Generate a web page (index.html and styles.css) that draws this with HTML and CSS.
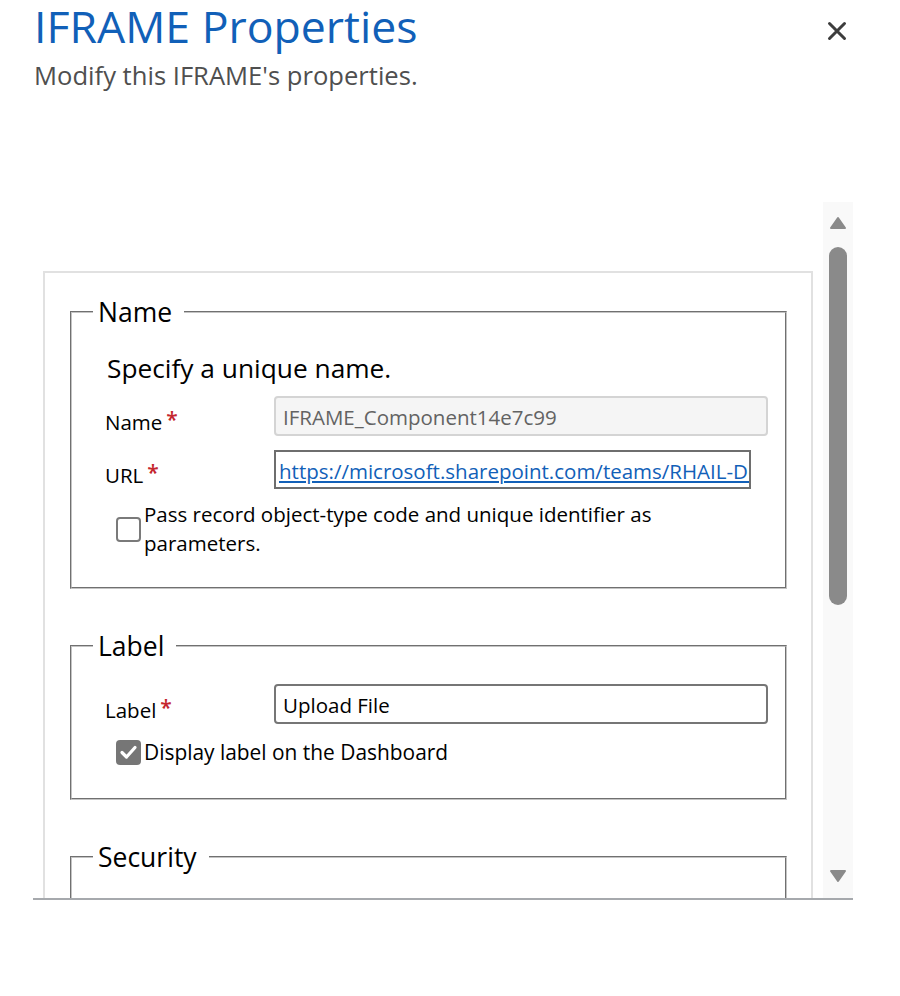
FILE: index.html
```html
<!DOCTYPE html>
<html lang="en">
<head>
<meta charset="utf-8">
<title>IFRAME Properties</title>
<link rel="stylesheet" href="styles.css">
</head>
<body>
<div class="dialog">
  <header class="dlg-header">
    <div class="titles">
      <h1 class="title">IFRAME Properties</h1>
      <p class="subtitle">Modify this IFRAME's properties.</p>
    </div>
    <button class="close" aria-label="Close">
      <svg width="20" height="20" viewBox="0 0 20 20"><path d="M2.5 2.5 L17.5 17.5 M17.5 2.5 L2.5 17.5" stroke="#3d3d3d" stroke-width="3" stroke-linecap="round" fill="none"/></svg>
    </button>
  </header>

  <div class="scroller">
    <div class="viewport">
      <div class="panel">
        <fieldset class="group">
          <legend>Name</legend>
          <p class="desc">Specify a unique name.</p>
          <div class="row">
            <label class="lbl">Name<span class="req">*</span></label>
            <div class="input disabled">IFRAME_Component14e7c99</div>
          </div>
          <div class="row row-url">
            <label class="lbl">URL<span class="req">*</span></label>
            <div class="input url"><a href="#">https://microsoft.sharepoint.com/teams/RHAIL-Dev/Shared%20Documents</a></div>
          </div>
          <div class="check check-first">
            <span class="box"></span>
            <span class="check-text">Pass record object-type code and unique identifier as parameters.</span>
          </div>
        </fieldset>

        <fieldset class="group group-label">
          <legend>Label</legend>
          <div class="row row-label">
            <label class="lbl">Label<span class="req">*</span></label>
            <div class="input normal">Upload File</div>
          </div>
          <div class="check check-label">
            <span class="box checked">
              <svg width="25" height="25" viewBox="0 0 25 25"><path d="M6 12.5 L10.5 17 L19 7.5" stroke="#fff" stroke-width="3.2" fill="none" stroke-linecap="round" stroke-linejoin="round"/></svg>
            </span>
            <span class="check-text">Display label on the Dashboard</span>
          </div>
        </fieldset>

        <fieldset class="group group-security">
          <legend>Security</legend>
        </fieldset>
      </div>
    </div>
    <div class="scrollbar">
      <svg class="arrow" width="18" height="14" viewBox="0 0 18 14"><path d="M9 2 L16 12 L2 12 Z" fill="#8a8a8a" stroke="#8a8a8a" stroke-width="2" stroke-linejoin="round"/></svg>
      <div class="thumb"></div>
      <svg class="arrow arrow-down" width="18" height="14" viewBox="0 0 18 14"><path d="M2 2 L16 2 L9 12 Z" fill="#8a8a8a" stroke="#8a8a8a" stroke-width="2" stroke-linejoin="round"/></svg>
    </div>
  </div>
</div>
</body>
</html>
```

FILE: styles.css
```css
* { box-sizing: border-box; }

body {
  margin: 0;
  background: #fff;
  font-family: "Open Sans", "Noto Sans", sans-serif;
  color: #000;
}

.dialog {
  width: 900px;
}

.dlg-header {
  display: flex;
  justify-content: space-between;
  align-items: flex-start;
  padding: 0 53px 0 34px;
}

.title {
  margin: 0;
  font-size: 44.6px;
  line-height: 52px;
  font-weight: 400;
  color: #1160b8;
}

.subtitle {
  margin: 7px 0 0;
  font-size: 25.6px;
  line-height: 34px;
  color: #4f4f4f;
}

.close {
  margin-top: 21px;
  width: 20px;
  height: 20px;
  padding: 0;
  border: 0;
  background: none;
  display: block;
}
.close svg { display: block; }

.scroller {
  margin: 109px 0 0 33px;
  width: 820px;
  height: 698px;
  border-bottom: 2px solid #a6a9ad;
  display: flex;
}

.viewport {
  flex: 1;
  overflow: hidden;
  padding: 69px 0 0 10px;
}

.panel {
  width: 770px;
  border: 2px solid #e1e1e1;
  border-bottom: 0;
  padding: 21px 24px 0 25px;
  min-height: 700px;
}

.group {
  margin: 0 0 39px;
  padding: 0 17px 29px 21px;
  border: 2px groove #c4c4c4;
  min-width: 0;
}
.group-label {
  padding-bottom: 31px;
}

.group legend {
  padding: 0 12px 0 5px;
  font-size: 26.5px;
  line-height: 36px;
}

.desc {
  margin: 20px 0 0;
  padding-left: 14px;
  font-size: 26.3px;
  line-height: 36px;
}

.row {
  display: flex;
  align-items: flex-end;
  padding-left: 12px;
  margin-top: 10px;
}
.row-url { margin-top: 14px; }
.row-label { margin-top: 20px; }

.lbl {
  width: 169px;
  flex: none;
  font-size: 20.5px;
  line-height: 28px;
}

.req {
  color: #c4262e;
  margin-left: 4px;
  font-size: 21px;
  font-weight: 600;
  position: relative;
  top: -3px;
}

.input {
  height: 40px;
  width: 494px;
  flex: none;
  padding: 2px 8px 0 7px;
  font-size: 20.5px;
  line-height: 34px;
  white-space: nowrap;
  overflow: hidden;
  border-radius: 4px;
}

.disabled {
  background: #f5f5f5;
  border: 2px solid #d4d4d4;
  color: #636363;
}

.url {
  width: 477px;
  height: 39px;
  border: 2px solid #6e6e6e;
  border-radius: 0;
  padding-left: 3px;
}
.url a {
  color: #1160b8;
  text-decoration: underline;
}

.normal {
  border: 2px solid #767676;
  color: #000;
}

.check {
  display: flex;
  align-items: center;
  padding-left: 23px;
}
.check-first { margin-top: 11px; }
.check-label { margin-top: 14px; }

.box {
  width: 25px;
  height: 25px;
  flex: none;
  border: 2px solid #7a7a7a;
  border-radius: 4px;
  background: #fff;
}
.box.checked {
  border: 0;
  background: #767676;
}
.box svg { display: block; }

.check-text {
  margin-left: 3px;
  max-width: 600px;
  font-size: 20.5px;
  line-height: 29px;
}
.check-label .check-text {
  font-size: 20.9px;
}

.group-security {
  min-height: 300px;
}

.scrollbar {
  width: 30px;
  flex: none;
  background: #f9f9f9;
  display: flex;
  flex-direction: column;
  align-items: center;
  padding: 14px 0 15px;
}
.arrow { display: block; flex: none; }
.thumb {
  margin-top: 17px;
  width: 18px;
  height: 358px;
  border-radius: 9px;
  background: #8a8a8a;
}
.arrow-down { margin-top: auto; }
```
